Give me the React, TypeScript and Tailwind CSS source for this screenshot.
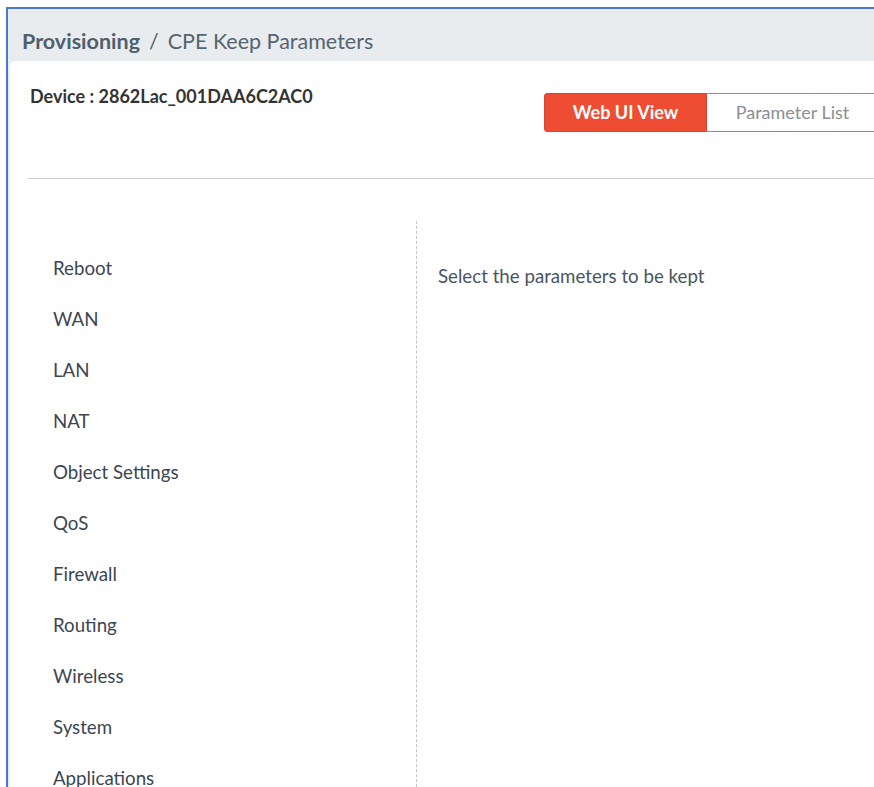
import { useState } from "react";

const sections = [
  "Reboot",
  "WAN",
  "LAN",
  "NAT",
  "Object Settings",
  "QoS",
  "Firewall",
  "Routing",
  "Wireless",
  "System",
  "Applications",
];

export default function App() {
  const [view, setView] = useState<"web" | "list">("web");

  return (
    <div className="h-[787px] w-[874px] overflow-hidden bg-white font-['Lato',sans-serif]">
      <div className="ml-[6px] mt-[7px] h-full border-l-2 border-t-2 border-[#4a78cf] bg-[#e8ecef] pl-[2px]">
        <div className="flex h-[52px] items-center pl-[12px] pt-[12px] text-[21.5px] text-[#566470]">
          <span className="font-bold text-[#4f5f6c]">Provisioning</span>
          <span className="mx-[9px]">/</span>
          <span>CPE Keep Parameters</span>
        </div>

        <div className="h-full rounded-tl-[5px] bg-white pl-[18px]">
          <div className="flex h-[118px] items-start border-b border-[#cfcfcf]">
            <div className="pl-[2px] pt-[22px] text-[18px] font-bold text-[#333]">
              Device : 2862Lac_001DAA6C2AC0
            </div>
            <div className="ml-auto mr-[-5px] mt-[32px] flex h-[39px] shrink-0 text-[18px]">
              <button
                onClick={() => setView("web")}
                className={
                  view === "web"
                    ? "w-[163px] rounded-l-[3px] border border-[#d8462f] bg-[#ee4d34] font-bold text-white"
                    : "w-[163px] rounded-l-[3px] border border-[#ee6a55] bg-white text-[#8a8f94]"
                }
              >
                Web UI View
              </button>
              <button
                onClick={() => setView("list")}
                className={
                  view === "list"
                    ? "w-[172px] border border-[#d8462f] bg-[#ee4d34] font-bold text-white"
                    : "w-[172px] border border-l-0 border-[#ee6a55] bg-white text-[#8a8f94]"
                }
              >
                Parameter List
              </button>
            </div>
          </div>

          <div className="mt-[42px] flex">
            <ul className="w-[389px] border-r border-dashed border-[#c4c4c4] pl-[25px] pt-[35px] text-[18.7px] text-[#3b4652]">
              {sections.map((s) => (
                <li key={s} className="h-[51px] leading-[24px]">
                  {s}
                </li>
              ))}
            </ul>
            <div className="pl-[21px] pt-[43px] text-[18.7px] leading-[24px] text-[#4a5561]">
              Select the parameters to be kept
            </div>
          </div>
        </div>
      </div>
    </div>
  );
}
